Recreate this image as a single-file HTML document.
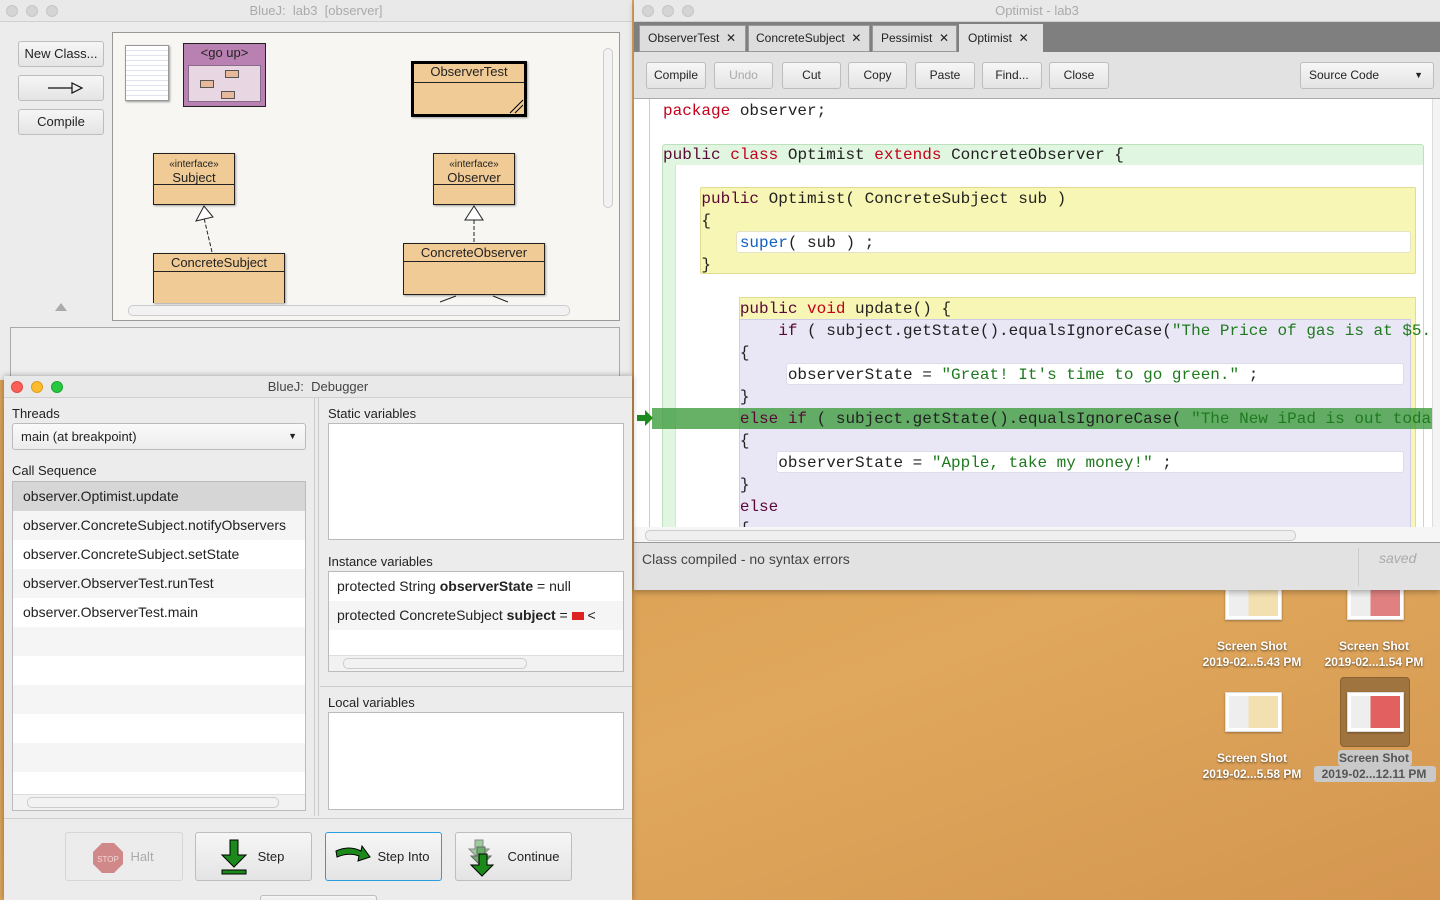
<!DOCTYPE html>
<html style="overflow:hidden;width:1440px;height:900px"><head><meta charset="utf-8"><style>
*{box-sizing:border-box;margin:0;padding:0}
body{width:1440px;height:900px;overflow:hidden;position:relative;font-family:"Liberation Sans",sans-serif;font-size:13px;color:#222;background:linear-gradient(160deg,#e2b066 0%,#d89d52 40%,#e0a85c 70%,#d49650 100%)}
.a{position:absolute}
.tb{background:#e9e9e9;border-bottom:1px solid #d0d0d0;text-align:center;color:#aaa;font-size:13px;line-height:22px}
.dot{position:absolute;top:5px;width:12px;height:12px;border-radius:6px;background:#d4d4d4;border:1px solid #c6c6c6}
.btn{position:absolute;background:linear-gradient(#f6f6f6,#e4e4e4);border:1px solid #bdbdbd;border-radius:3px;text-align:center;font-size:13px;color:#222}
.cls{position:absolute;background:#f0cb96;border:1px solid #222;box-shadow:1px 1px 2px rgba(0,0,0,.35);text-align:center;font-size:13px;color:#222}
.cls .h{border-bottom:1px solid #222}
.mono{font-family:"Liberation Mono",monospace;font-size:16px;white-space:pre;line-height:22px}
.kw{color:#c4001a}.pb{color:#5a0838}.st{color:#1f7a1f}.sp{color:#1060c0}
.ic{position:absolute;color:#fff;font-weight:bold;font-size:12px;text-align:center;text-shadow:0 1px 2px rgba(0,0,0,.6);line-height:16px;width:120px}
.th{position:absolute;width:57px;height:40px;background:#fff;border:1px solid #ddd;box-shadow:0 1px 2px rgba(0,0,0,.3)}
.th i{position:absolute;left:3px;top:3px;right:3px;bottom:3px;background:linear-gradient(90deg,#eee 0 40%,#f3e0b0 40% 100%)}
</style></head><body>

<div class="th" style="left:1225px;top:580px"><i></i></div>
<div class="th" style="left:1347px;top:580px"><i style="background:linear-gradient(90deg,#eee 0 40%,#e08080 40% 100%)"></i></div>
<div class="ic" style="left:1192px;top:638px">Screen Shot<br>2019-02...5.43 PM</div>
<div class="ic" style="left:1314px;top:638px">Screen Shot<br>2019-02...1.54 PM</div>
<div class="th" style="left:1225px;top:692px"><i></i></div>
<div class="a" style="left:1340px;top:677px;width:70px;height:70px;background:#a0743e;border:1px solid #8a6232;border-radius:4px"></div>
<div class="th" style="left:1347px;top:692px"><i style="background:linear-gradient(90deg,#eee 0 40%,#e26060 40% 100%)"></i></div>
<div class="ic" style="left:1192px;top:750px">Screen Shot<br>2019-02...5.58 PM</div>
<div class="a" style="left:1338px;top:750px;width:74px;height:16px;background:#c9c9c9;border-radius:3px"></div>
<div class="a" style="left:1314px;top:766px;width:122px;height:16px;background:#c9c9c9;border-radius:3px"></div>
<div class="ic" style="left:1314px;top:750px;color:#555;text-shadow:none">Screen Shot<br>2019-02...12.11 PM</div>

<div class="a" style="left:0;top:0;width:632px;height:380px;background:#ececec">
 <div class="a tb" style="left:0;top:0;width:632px;height:22px">BlueJ:&nbsp; lab3&nbsp; [observer]</div>
 <div class="dot" style="left:6px"></div><div class="dot" style="left:26px"></div><div class="dot" style="left:46px"></div>
 <div class="btn" style="left:18px;top:41px;width:86px;height:26px;line-height:24px">New Class...</div>
 <div class="btn" style="left:18px;top:75px;width:86px;height:26px"><svg width="50" height="24" viewBox="0 0 50 24"><path d="M12 12H36M36 7L46 12L36 17Z" stroke="#111" fill="none" stroke-width="1.2"/></svg></div>
 <div class="btn" style="left:18px;top:109px;width:86px;height:26px;line-height:24px">Compile</div>
 <div class="a" style="left:55px;top:303px;width:0;height:0;border-left:6px solid transparent;border-right:6px solid transparent;border-bottom:8px solid #aaa"></div>
 <div class="a" style="left:112px;top:32px;width:508px;height:289px;background:#f7f6f2;border:1px solid #999"></div>
 <div class="a" style="left:603px;top:48px;width:10px;height:160px;border:1px solid #ccc;border-radius:5px;background:#f2f2f2"></div>
 <div class="a" style="left:128px;top:305px;width:442px;height:11px;border:1px solid #ccc;border-radius:5px;background:#f2f2f2"></div>
 <div class="a" style="left:125px;top:45px;width:44px;height:56px;background:repeating-linear-gradient(#fff 0 4px,#dde4ee 4px 5px);border:1px solid #999;box-shadow:1px 1px 2px #999"></div>
 <div class="a" style="left:183px;top:43px;width:83px;height:64px;background:#b981b1;border:1px solid #222;text-align:center;font-size:13px;line-height:18px">&lt;go up&gt;
  <div class="a" style="left:4px;top:21px;width:73px;height:37px;background:#e8d6e2;border:1px solid #8a6a8a">
   <div class="a" style="left:36px;top:4px;width:14px;height:8px;background:#e8b89a;border:1px solid #555"></div>
   <div class="a" style="left:11px;top:14px;width:14px;height:8px;background:#e8b89a;border:1px solid #555"></div>
   <div class="a" style="left:32px;top:25px;width:14px;height:8px;background:#e8b89a;border:1px solid #555"></div>
  </div></div>
 <div class="cls" style="left:411px;top:61px;width:116px;height:56px;border:3px solid #000"><div class="h" style="height:19px;line-height:16px">ObserverTest</div>
  <svg class="a" style="right:0;bottom:0" width="16" height="16"><path d="M15 2L2 15M15 7L7 15" stroke="#000"/></svg></div>
 <div class="cls" style="left:153px;top:153px;width:82px;height:52px"><div class="h" style="height:31px;line-height:13px;padding-top:2px"><span style="font-size:10px">«interface»</span><br>Subject</div></div>
 <div class="cls" style="left:433px;top:153px;width:82px;height:52px"><div class="h" style="height:31px;line-height:13px;padding-top:2px"><span style="font-size:10px">«interface»</span><br>Observer</div></div>
 <div class="cls" style="left:153px;top:253px;width:132px;height:50px;border-bottom:none"><div class="h" style="height:18px;line-height:17px">ConcreteSubject</div></div>
 <div class="cls" style="left:403px;top:243px;width:142px;height:52px"><div class="h" style="height:18px;line-height:17px">ConcreteObserver</div></div>
 <svg class="a" style="left:0;top:0" width="632" height="320"><g stroke="#222" fill="#fff" stroke-width="1"><path d="M212 252L204 218" stroke-dasharray="4 2"/><path d="M204 206L196 221L213 217Z"/><path d="M474 242V220" stroke-dasharray="4 2"/><path d="M474 206L465 220H483Z"/><path d="M440 302L456 296M493 296L508 302"/></g></svg>
 <div class="a" style="left:10px;top:327px;width:610px;height:53px;background:#eeeeee;border:1px solid #aaa"></div>
</div>

<div class="a" style="left:634px;top:0;width:806px;height:590px;background:#e2e2e2;box-shadow:0 2px 6px rgba(0,0,0,.3)">
 <div class="a tb" style="left:0;top:0;width:806px;height:22px">Optimist - lab3</div>
 <div class="dot" style="left:8px"></div><div class="dot" style="left:28px"></div><div class="dot" style="left:48px"></div>
 <div class="a" style="left:0;top:22px;width:806px;height:30px;background:#7f7f7f"></div>
 <div class="a" style="left:5px;top:25px;width:107px;height:27px;background:#ddd;border:1px solid #999;line-height:25px;padding-left:8px;font-size:12px">ObserverTest&nbsp; ✕</div>
 <div class="a" style="left:114px;top:25px;width:122px;height:27px;background:#ddd;border:1px solid #999;line-height:25px;padding-left:7px;font-size:12px">ConcreteSubject&nbsp; ✕</div>
 <div class="a" style="left:238px;top:25px;width:85px;height:27px;background:#ddd;border:1px solid #999;line-height:25px;padding-left:8px;font-size:12px">Pessimist&nbsp; ✕</div>
 <div class="a" style="left:325px;top:24px;width:84px;height:29px;background:#e2e2e2;line-height:28px;padding-left:9px;font-size:12px">Optimist&nbsp; ✕</div>
 <div class="btn" style="left:12px;top:62px;width:60px;height:27px;line-height:25px;font-size:12px">Compile</div>
 <div class="btn" style="left:80px;top:62px;width:59px;height:27px;line-height:25px;font-size:12px;color:#aaa">Undo</div>
 <div class="btn" style="left:148px;top:62px;width:59px;height:27px;line-height:25px;font-size:12px">Cut</div>
 <div class="btn" style="left:214px;top:62px;width:59px;height:27px;line-height:25px;font-size:12px">Copy</div>
 <div class="btn" style="left:281px;top:62px;width:60px;height:27px;line-height:25px;font-size:12px">Paste</div>
 <div class="btn" style="left:348px;top:62px;width:60px;height:27px;line-height:25px;font-size:12px">Find...</div>
 <div class="btn" style="left:415px;top:62px;width:60px;height:27px;line-height:25px;font-size:12px">Close</div>
 <div class="btn" style="left:666px;top:62px;width:134px;height:27px;line-height:25px;font-size:12px;text-align:left;padding-left:8px">Source Code<span style="position:absolute;right:10px;font-size:9px">▼</span></div>
 <div class="a" style="left:0;top:98px;width:806px;height:429px;background:#fff;border-top:1px solid #aaa;overflow:hidden">
  <div class="a" style="left:15px;top:0;width:1px;height:429px;background:#ccc"></div>
  <div class="a" style="left:28px;top:45px;width:762px;height:400px;background:#e0f6e0;border:1px solid #bde0bd;border-radius:3px"></div>
  <div class="a" style="left:41px;top:66px;width:748px;height:380px;background:#fff;border-left:1px solid #cde8cd"></div>
  <div class="a" style="left:66px;top:88px;width:716px;height:87px;background:#f8f6b4;border:1px solid #e0dc90;border-radius:2px"></div>
  <div class="a" style="left:102px;top:132px;width:675px;height:22px;background:#fff;border:1px solid #e4e4c4;border-radius:3px"></div>
  <div class="a" style="left:105px;top:198px;width:677px;height:240px;background:#f8f6b4;border:1px solid #e0dc90"></div>
  <div class="a" style="left:105px;top:220px;width:672px;height:220px;background:#e9e7f6;border:1px solid #cfcde6"></div>
  <div class="a" style="left:152px;top:264px;width:618px;height:22px;background:#fff;border:1px solid #dcdcec;border-radius:3px"></div>
  <div class="a" style="left:142px;top:352px;width:628px;height:22px;background:#fff;border:1px solid #dcdcec;border-radius:3px"></div>
  <div class="a" style="left:18px;top:309px;width:780px;height:21px;background:rgba(60,155,60,.78)"></div>
  <svg class="a" style="left:2px;top:310px" width="18" height="18"><path d="M1 6H9V1L17 9L9 17V12H1Z" fill="#1c8a1c"/></svg>
  <div class="a mono" style="left:29px;top:1px;width:769px;overflow:hidden"><span class="kw">package</span> observer;

<span class="pb">public</span> <span class="kw">class</span> Optimist <span class="kw">extends</span> ConcreteObserver {

    <span class="pb">public</span> Optimist( ConcreteSubject sub )
    {
        <span class="sp">super</span>( sub ) ;
    }

        <span class="pb">public</span> <span class="kw">void</span> update() {
            <span class="pb">if</span> ( subject.getState().equalsIgnoreCase(<span class="st">"The Price of gas is at $5.00"</span>
        {
             observerState = <span class="st">"Great! It's time to go green."</span> ;
        }
        <span class="pb">else if</span> ( subject.getState().equalsIgnoreCase( <span class="st">"The New iPad is out today"</span>
        {
            observerState = <span class="st">"Apple, take my money!"</span> ;
        }
        <span class="pb">else</span>
        {</div>
  <div class="a" style="left:798px;top:0;width:8px;height:429px;background:#f4f4f4;border-left:1px solid #ddd"></div>
 </div>
 <div class="a" style="left:0;top:527px;width:806px;height:16px;background:#f6f6f6;border-bottom:1px solid #999"></div>
 <div class="a" style="left:11px;top:530px;width:651px;height:11px;border:1px solid #ccc;border-radius:5px;background:#efefef"></div>
 <div class="a" style="left:8px;top:551px;font-size:14px;color:#444">Class compiled - no syntax errors</div>
 <div class="a" style="left:724px;top:548px;width:1px;height:38px;background:#ccc"></div>
 <div class="a" style="left:745px;top:550px;font-size:14px;color:#aaa;font-style:italic">saved</div>
</div>

<div class="a" style="left:4px;top:376px;width:628px;height:524px;background:#ececec;box-shadow:0 0 6px rgba(0,0,0,.35);overflow:hidden">
 <div class="a tb" style="left:0;top:0;width:628px;height:22px;color:#444">BlueJ:&nbsp; Debugger</div>
 <div class="dot" style="left:7px;background:#fc5f57;border-color:#de4a42"></div><div class="dot" style="left:27px;background:#fdbc2e;border-color:#de9f20"></div><div class="dot" style="left:47px;background:#28c840;border-color:#1aa82d"></div>
 <div class="a" style="left:8px;top:30px">Threads</div>
 <div class="a" style="left:8px;top:47px;width:294px;height:27px;background:linear-gradient(#fafafa,#ececec);border:1px solid #bbb;border-radius:3px;line-height:25px;padding-left:8px">main (at breakpoint)<span style="position:absolute;right:8px;font-size:9px">▼</span></div>
 <div class="a" style="left:8px;top:87px">Call Sequence</div>
 <div class="a" style="left:8px;top:105px;width:294px;height:330px;background:repeating-linear-gradient(#fff 0 29px,#f5f5f5 29px 58px);border:1px solid #bbb;overflow:hidden;font-size:14px">
  <div style="height:29px;line-height:29px;padding-left:10px;background:#d6d6d6">observer.Optimist.update</div>
  <div style="height:29px;line-height:29px;padding-left:10px;white-space:nowrap">observer.ConcreteSubject.notifyObservers</div>
  <div style="height:29px;line-height:29px;padding-left:10px">observer.ConcreteSubject.setState</div>
  <div style="height:29px;line-height:29px;padding-left:10px">observer.ObserverTest.runTest</div>
  <div style="height:29px;line-height:29px;padding-left:10px">observer.ObserverTest.main</div>
  <div class="a" style="left:0;bottom:0;width:292px;height:16px;background:#f2f2f2;border-top:1px solid #ddd"><div class="a" style="left:14px;top:2px;width:252px;height:11px;border:1px solid #ccc;border-radius:5px"></div></div>
 </div>
 <div class="a" style="left:310px;top:22px;width:1px;height:418px;background:#ccc"></div>
 <div class="a" style="left:314px;top:22px;width:1px;height:418px;background:#ccc"></div>
 <div class="a" style="left:324px;top:30px">Static variables</div>
 <div class="a" style="left:324px;top:47px;width:296px;height:117px;background:#fff;border:1px solid #bbb"></div>
 <div class="a" style="left:324px;top:178px">Instance variables</div>
 <div class="a" style="left:324px;top:195px;width:296px;height:101px;background:#fff;border:1px solid #bbb;font-size:14px;overflow:hidden;white-space:nowrap">
  <div style="height:29px;line-height:29px;padding-left:8px">protected String <b>observerState</b> = null</div>
  <div style="height:29px;line-height:29px;padding-left:8px;background:#f5f5f5">protected ConcreteSubject <b>subject</b> = <span style="display:inline-block;width:12px;height:8px;background:#d22"></span> &lt;</div>
  <div class="a" style="left:0;bottom:0;width:294px;height:16px;background:#f2f2f2;border-top:1px solid #ddd"><div class="a" style="left:14px;top:2px;width:184px;height:11px;border:1px solid #ccc;border-radius:5px"></div></div>
 </div>
 <div class="a" style="left:316px;top:310px;width:312px;height:1px;background:#ccc"></div>
 <div class="a" style="left:324px;top:319px">Local variables</div>
 <div class="a" style="left:324px;top:336px;width:296px;height:98px;background:#fff;border:1px solid #bbb"></div>
 <div class="a" style="left:0;top:442px;width:628px;height:1px;background:#d0d0d0"></div>
 <div class="btn" style="left:61px;top:456px;width:118px;height:49px;background:#ececec;border-color:#d6d6d6;color:#aaa;line-height:47px;padding-left:36px">Halt
  <svg class="a" style="left:26px;top:9px" width="32" height="32"><path d="M10 1H22L31 10V22L22 31H10L1 22V10Z" fill="#d08888"/><text x="16" y="20" font-size="8" fill="#f4d4d4" text-anchor="middle" font-family="Liberation Sans">STOP</text></svg></div>
 <div class="btn" style="left:191px;top:456px;width:117px;height:49px;line-height:47px;padding-left:35px">Step
  <svg class="a" style="left:24px;top:6px" width="32" height="36"><path d="M10 1H18V16H26L14 28L2 16H10Z" fill="#1b8a1b" stroke="#000"/><rect x="2" y="31" width="24" height="4" fill="#1b8a1b" stroke="#000"/></svg></div>
 <div class="btn" style="left:321px;top:456px;width:117px;height:49px;border-color:#2a9fe0;line-height:47px;padding-left:40px">Step Into
  <svg class="a" style="left:9px;top:12px" width="36" height="24"><path d="M1 6Q14 0 26 6L27 1L35 12L23 16L24 11Q14 7 2 12Z" fill="#1b8a1b" stroke="#000"/></svg></div>
 <div class="btn" style="left:451px;top:456px;width:117px;height:49px;line-height:47px;padding-left:40px">Continue
  <svg class="a" style="left:9px;top:6px" width="32" height="40"><path d="M10 1H18V10H24L14 20L4 10H10Z" fill="#9ccc9c" stroke="#888"/><path d="M12 8H20V17H26L16 27L6 17H12Z" fill="#6cad6c" stroke="#666"/><path d="M14 15H22V26H28L17 37L6 26H14Z" fill="#1b8a1b" stroke="#000"/></svg></div>
 <div class="btn" style="left:256px;top:519px;width:117px;height:10px"></div>
</div>
</body></html>
